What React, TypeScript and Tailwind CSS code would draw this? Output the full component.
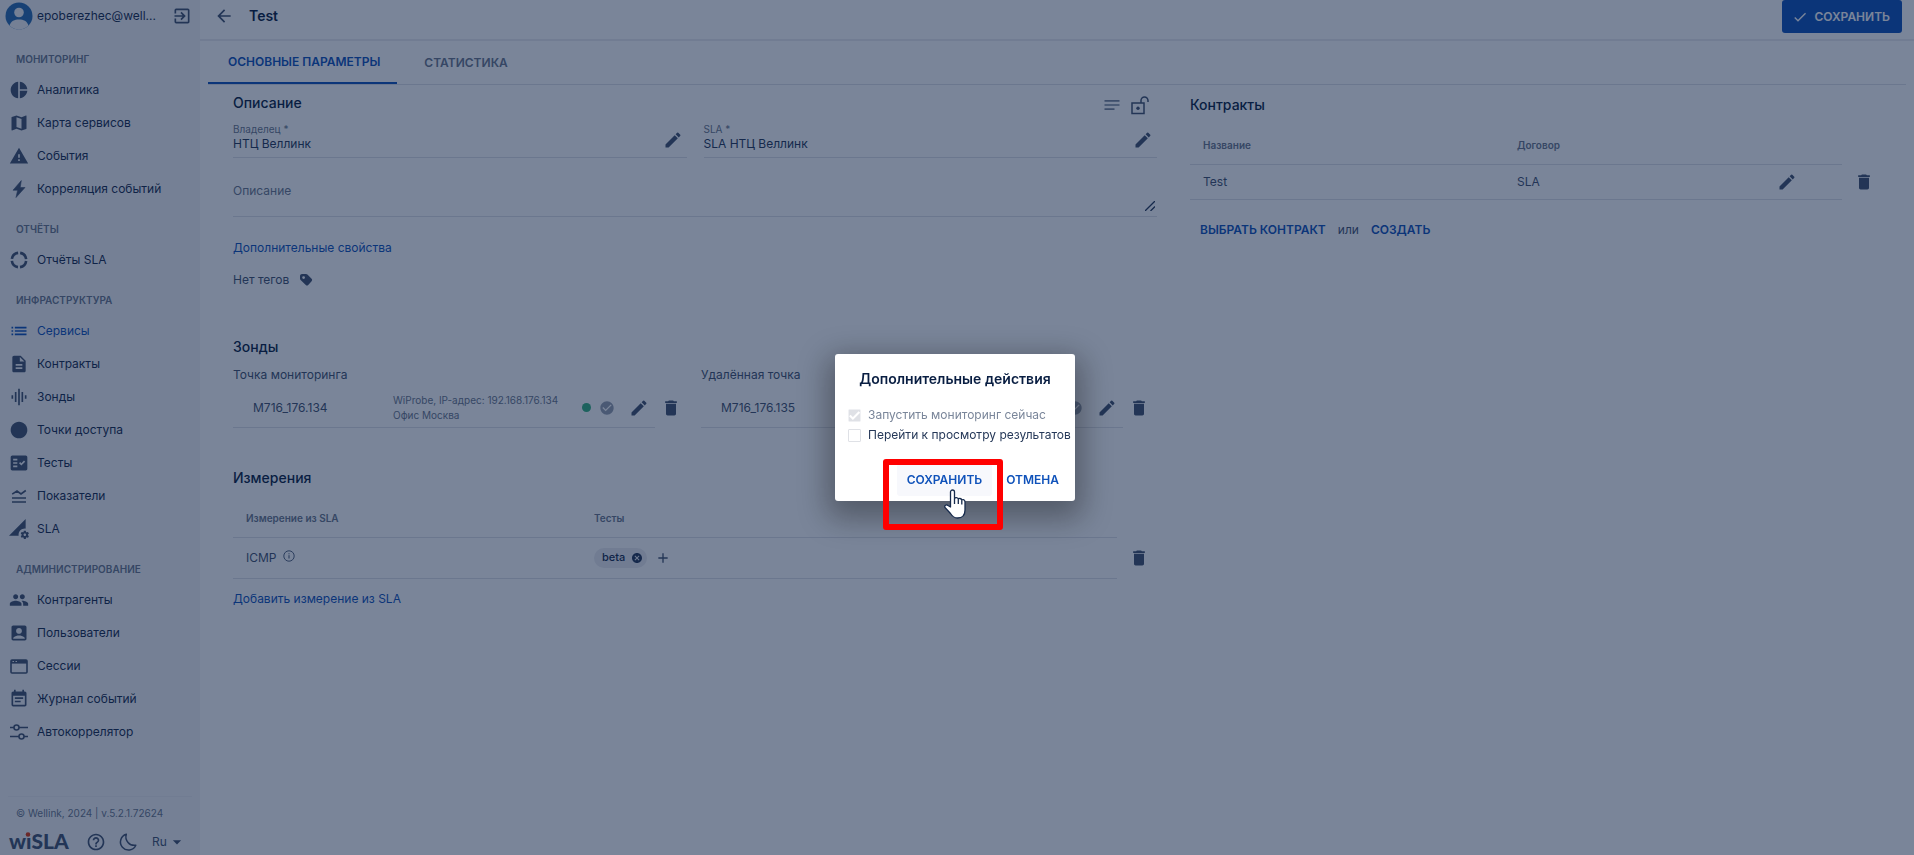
import { type ReactNode } from "react";
import {
  MdAccountBox, MdAdd, MdArrowBack, MdArrowDropDown, MdCancel, MdCheck, MdCheckCircle, MdCircle, MdDelete,
  MdDescription, MdEdit, MdEventNote, MdExitToApp, MdFactCheck, MdGraphicEq, MdHelpOutline, MdList, MdMap, MdNotes,
  MdPeople, MdPermDataSetting, MdPieChart, MdWarning,
} from "react-icons/md";

function BoltIcon() {
  return (
    <svg viewBox="0 0 20 20" className="size-5" fill="currentColor">
      <path d="M12.300 1.600 4 11.200h4.600l-1.600 7.300L16 8.500h-4.800l1.100-6.900Z" stroke="currentColor" strokeWidth=".6" strokeLinejoin="round" />
    </svg>
  );
}

function DonutIcon() {
  return (
    <svg viewBox="0 0 20 20" className="size-5" fill="none" stroke="currentColor" strokeWidth="2.6">
      <circle cx="10" cy="10" r="7.2" strokeDasharray="9.2 2.1" strokeDashoffset="-1" />
    </svg>
  );
}

function ApproxIcon() {
  return (
    <svg viewBox="0 0 20 20" className="size-5" fill="none" stroke="currentColor" strokeWidth="1.6">
      <path d="M3.2 8.2 8 5l4 3 4.800-3.500" />
      <path d="M3 12h14M3 16h14" />
    </svg>
  );
}

function WindowIcon() {
  return (
    <svg viewBox="0 0 20 20" className="size-5" fill="none" stroke="currentColor" strokeWidth="1.6">
      <rect x="2" y="4" width="16" height="13" rx="1" />
      <path d="M2 5.800h16" strokeWidth="3.600" />
      <path d="M3.500 5.500H5M6.500 5.500H8" stroke="#f4f5f7" strokeWidth="1.200" />
    </svg>
  );
}

function SlidersIcon() {
  return (
    <svg viewBox="0 0 20 20" className="size-5" fill="none" stroke="currentColor" strokeWidth="1.6">
      <circle cx="7.500" cy="5.500" r="2.500" />
      <circle cx="12.500" cy="14.500" r="2.500" />
      <path d="M1 5.500h4M10 5.500h9M1 14.500h9M15 14.500h4" />
    </svg>
  );
}

function UnlockIcon() {
  return (
    <svg viewBox="0 0 20 20" className="size-5" fill="none" stroke="currentColor" strokeWidth="1.500">
      <rect x="2" y="8" width="12" height="10.500" />
      <path d="M11 8V5.500a3.500 3.500 0 0 1 7 0V7" />
      <circle cx="8" cy="13.200" r="1.700" fill="currentColor" stroke="none" />
    </svg>
  );
}

function TagIcon() {
  return (
    <svg viewBox="0 0 14 14" className="size-3.5" fill="currentColor" fillRule="evenodd">
      <path d="M3 1h4c.600 0 1 .200 1.400.600l4.200 4.200c.700.700.700 1.700 0 2.400L9.200 11.900c-.700.700-1.700.700-2.400 0L1.600 7C1.200 6.600 1 6.200 1 5.600V3c0-1.100.900-2 2-2Zm1.600 2.200a1.400 1.400 0 1 0 0 2.800 1.400 1.400 0 0 0 0-2.800Z" />
    </svg>
  );
}

function InfoIcon() {
  return (
    <svg viewBox="0 0 12 12" className="mb-1 size-3" fill="none" stroke="currentColor">
      <circle cx="6" cy="6" r="5.200" strokeWidth=".9" />
      <path d="M6 5.200v3.300M6 3.300v1" />
    </svg>
  );
}

function MoonIcon() {
  return (
    <svg viewBox="0 0 20 20" className="size-5" fill="none" stroke="currentColor" strokeWidth="1.500" strokeLinejoin="round">
      <path d="M8.300 2.300A8 8 0 1 0 17.800 13.200 8.500 8.500 0 0 1 8.300 2.300Z" />
    </svg>
  );
}

function Avatar() {
  return (
    <svg viewBox="0 0 28 28" className="size-7">
      <circle cx="14" cy="14" r="13.500" fill="#2b6cb0" />
      <circle cx="14" cy="10.500" r="4.800" fill="#f4f5f7" />
      <path d="M4.500 23.500C6 19 9.500 17.500 14 17.500s8 1.500 9.500 6A13 13 0 0 1 4.500 23.500Z" fill="#f4f5f7" />
    </svg>
  );
}

function Logo() {
  return (
    <svg viewBox="0 0 64 26" className="h-[26px] w-16" role="img" aria-label="wiSLA">
      <text x="1" y="20" fontFamily="Lato, sans-serif" fontWeight="900" fontSize="21" fill="currentColor">wıSLA</text>
      <circle cx="20" cy="5.500" r="2.300" fill="#de350b" />
    </svg>
  );
}

function HandCursor() {
  return (
    <svg viewBox="0 0 22 30" className="absolute top-[135px] left-[109px] h-[30px] w-[22px]" fill="#fff" stroke="#172b4d" strokeWidth="1.300" strokeLinejoin="round">
      <path d="M6.500 18V3a2 2 0 0 1 4 0v7c0-2 3.800-2 3.800.5 0-1.500 3.500-1.500 3.500 1 0-1.500 3.200-1.200 3.200 1.500v8c0 5-2.500 8-7.500 8-4 0-5.500-2-7-4.500L1 18.500c-1-2 1.500-3.500 3-2Z" />
      <path d="M10.500 10v5M14.300 11v4M17.800 12v3.500" />
    </svg>
  );
}

const menu: { title: string; items: { label: string; icon: ReactNode; active?: boolean }[] }[] = [
  {
    title: "МОНИТОРИНГ",
    items: [
      { label: "Аналитика", icon: <MdPieChart /> },
      { label: "Карта сервисов", icon: <MdMap /> },
      { label: "События", icon: <MdWarning /> },
      { label: "Корреляция событий", icon: <BoltIcon /> },
    ],
  },
  { title: "ОТЧЁТЫ", items: [{ label: "Отчёты SLA", icon: <DonutIcon /> }] },
  {
    title: "ИНФРАСТРУКТУРА",
    items: [
      { label: "Сервисы", icon: <MdList />, active: true },
      { label: "Контракты", icon: <MdDescription /> },
      { label: "Зонды", icon: <MdGraphicEq /> },
      { label: "Точки доступа", icon: <MdCircle /> },
      { label: "Тесты", icon: <MdFactCheck /> },
      { label: "Показатели", icon: <ApproxIcon /> },
      { label: "SLA", icon: <MdPermDataSetting /> },
    ],
  },
  {
    title: "АДМИНИСТРИРОВАНИЕ",
    items: [
      { label: "Контрагенты", icon: <MdPeople /> },
      { label: "Пользователи", icon: <MdAccountBox /> },
      { label: "Сессии", icon: <WindowIcon /> },
      { label: "Журнал событий", icon: <MdEventNote /> },
      { label: "Автокоррелятор", icon: <SlidersIcon /> },
    ],
  },
];

function Sidebar() {
  return (
    <aside className="flex w-[200px] shrink-0 flex-col bg-[#f4f5f7] text-[#172b4d]">
      <div className="flex h-8 items-center gap-1 pr-2 pl-[5px]">
        <Avatar />
        <span className="flex-1 truncate">epoberezhec@well...</span>
        <button aria-label="Выйти" className="text-xl text-[#42526e]"><MdExitToApp /></button>
      </div>
      <nav className="pt-[3px]">
        {menu.map((group) => (
          <section key={group.title} className="pt-3.5">
            <h3 className="h-6 pl-4 text-[10px] leading-5 font-semibold text-[#6b778c]">{group.title}</h3>
            <ul>
              {group.items.map((item) => (
                <li key={item.label}>
                  <a
                    href="#"
                    className={
                      item.active
                        ? "flex h-[33px] items-center gap-2 pl-[9px] text-[#0f52ba]"
                        : "flex h-[33px] items-center gap-2 pl-[9px]"
                    }
                  >
                    <span className={item.active ? "text-xl" : "text-xl text-[#42526e]"}>{item.icon}</span>
                    {item.label}
                  </a>
                </li>
              ))}
            </ul>
          </section>
        ))}
      </nav>
      <footer className="mt-auto px-2">
        <p className="border-t border-[#ebecf0] py-2 pl-2 text-[10px] leading-4 text-[#6b778c]">© Wellink, 2024 | v.5.2.1.72624</p>
        <div className="flex h-[26px] items-center text-[#42526e]">
          <Logo />
          <button aria-label="Справка" className="ml-3.5 text-xl"><MdHelpOutline /></button>
          <button aria-label="Тема" className="ml-3"><MoonIcon /></button>
          <button className="ml-3.5 flex items-center">Ru<MdArrowDropDown className="text-xl" /></button>
        </div>
      </footer>
    </aside>
  );
}

function Field({ label, value, id }: { label: string; value: string; id: string }) {
  return (
    <div className="flex flex-1 items-center border-b border-[#dfe1e6] pr-1">
      <div className="flex h-[34px] flex-1 flex-col">
        <label htmlFor={id} className="text-[10px] leading-[13px] text-[#6b778c]">{label}</label>
        <input id={id} readOnly defaultValue={value} className="h-4 w-full bg-transparent text-[#253858] outline-none" />
      </div>
      <button aria-label="Изменить" className="text-xl"><MdEdit /></button>
    </div>
  );
}

function Probe({ title, name, children }: { title: string; name: string; children?: ReactNode }) {
  return (
    <div className="flex-1">
      <h3 className="h-[23px] leading-5">{title}</h3>
      <div className="flex items-center">
        <div className="flex h-10 flex-1 items-center border-b border-[#dfe1e6] pr-1.5 pl-5">
          <span className="w-[140px]">{name}</span>
          <p className="flex-1 text-[10px] leading-[15px] whitespace-nowrap text-[#6b778c]">{children}</p>
          <span className="size-[9px] rounded-full bg-[#36b37e]" />
          <MdCheckCircle className="ml-2 text-base text-[#97a0af]" />
          <button aria-label="Изменить" className="ml-3.5 text-xl"><MdEdit /></button>
        </div>
        <button aria-label="Удалить" className="w-8 pl-1.5 text-xl"><MdDelete /></button>
      </div>
    </div>
  );
}

function SaveDialog() {
  return (
    <div className="fixed inset-0 z-10 flex items-center justify-center bg-[#091e42]/54 pr-1">
      <div role="dialog" aria-labelledby="dialog-title" className="relative h-[147px] w-60 rounded-[3px] bg-white shadow-[0_10px_30px_8px_rgba(0,0,0,0.32)]">
        <h2 id="dialog-title" className="pt-3.5 text-center text-sm leading-[22px] font-semibold text-[#091e42]">Дополнительные действия</h2>
        <div className="flex flex-col pt-[15px] pl-[13px] leading-5">
          <label className="flex items-center gap-[7px] whitespace-nowrap text-[#7a869a]">
            <span className="relative flex size-[13px]">
              <input type="checkbox" defaultChecked disabled className="size-[13px] appearance-none rounded-[1px] bg-[#dfe1e6]" />
              <MdCheck className="absolute inset-0 size-[13px] stroke-2 text-white" />
            </span>
            Запустить мониторинг сейчас
          </label>
          <label className="flex items-center gap-[7px] whitespace-nowrap text-[#253858]">
            <input type="checkbox" className="size-[13px] appearance-none rounded-[1px] border border-[#dfe1e6]" />
            Перейти к просмотру результатов
          </label>
        </div>
        <div className="flex justify-end gap-1 pt-[19px] pr-1.5 font-semibold text-[#0f52ba]">
          <button className="h-8 rounded-[3px] bg-[#f7f8fc] px-2.5">СОХРАНИТЬ</button>
          <button className="h-8 px-2.5">ОТМЕНА</button>
        </div>
        <div className="absolute top-[105px] left-12 h-[71px] w-[120px] rounded-[3px] border-6 border-[#ff0000]" />
        <HandCursor />
      </div>
    </div>
  );
}

export default function App() {
  return (
    <div className="flex min-h-screen bg-white font-['Inter',sans-serif] text-xs text-[#42526e]">
      <Sidebar />
      <main className="min-w-0 flex-1">
        <header className="flex h-[41px] items-start border-b-2 border-[#ebecf0] pr-3 pl-3.5">
          <button aria-label="Назад" className="mt-1.5 text-xl"><MdArrowBack /></button>
          <h1 className="ml-[15px] flex-1 text-sm leading-8 font-semibold text-[#091e42]">Test</h1>
          <button className="flex h-[33px] items-center gap-1.5 rounded-[3px] bg-[#0f52ba] pr-3 pl-2.5 font-semibold text-white">
            <MdCheck className="text-base" />
            СОХРАНИТЬ
          </button>
        </header>

        <div className="mx-2 flex h-11 border-b border-[#dfe1e6] font-semibold">
          <button className="h-[43px] border-b-2 border-[#0f52ba] pr-[17px] pl-5 text-[#0f52ba]">ОСНОВНЫЕ ПАРАМЕТРЫ</button>
          <button className="h-[43px] px-[27px] text-[#6b778c]">СТАТИСТИКА</button>
        </div>

        <div className="flex gap-[33px] pr-10 pl-[33px]">
          <div className="w-[924px]">
            <section className="pt-1.5">
              <div className="flex h-7 justify-between pr-[7px]">
                <h2 className="text-sm leading-6 font-medium text-[#091e42]">Описание</h2>
                <div className="flex items-center gap-2">
                  <MdNotes className="text-xl text-[#7a869a]" />
                  <button aria-label="Разблокировать"><UnlockIcon /></button>
                </div>
              </div>
              <div className="flex gap-[17px] pt-1">
                <Field id="owner" label="Владелец *" value="НТЦ Веллинк" />
                <Field id="sla" label="SLA *" value="SLA НТЦ Веллинк" />
              </div>
              <div className="relative mt-[25px]">
                <textarea aria-label="Описание" placeholder="Описание" className="block h-[34px] w-full resize-none border-b border-[#dfe1e6] outline-none placeholder:text-[#6b778c]" />
                <svg viewBox="0 0 10 10" className="absolute right-0.5 bottom-1.5 size-2.5" stroke="#253858" strokeWidth="1.300">
                  <path d="M0 10 10 0M5.500 10 10 5.500" />
                </svg>
              </div>
              <a href="#" className="mt-[21px] block leading-5 text-[#0f52ba]">Дополнительные свойства</a>
              <div className="mt-3 flex items-center gap-2.5 leading-5">
                Нет тегов
                <TagIcon />
              </div>
            </section>

            <section className="pt-[47px]">
              <h2 className="mb-2 text-sm leading-5 font-medium text-[#091e42]">Зонды</h2>
              <div className="flex gap-3.5 pr-0.5">
                <Probe title="Точка мониторинга" name="M716_176.134">
                  WiProbe, IP-адрес: 192.168.176.134
                  <br />
                  Офис Москва
                </Probe>
                <Probe title="Удалённая точка" name="M716_176.135" />
              </div>
            </section>

            <section className="pt-10">
              <h2 className="text-sm leading-5 font-medium text-[#091e42]">Измерения</h2>
              <table className="mt-[13px] w-full">
                <thead>
                  <tr className="h-9 text-left text-[10px] text-[#6b778c]">
                    <th className="w-[348px] border-b border-[#dfe1e6] pl-[13px] font-semibold">Измерение из SLA</th>
                    <th className="border-b border-[#dfe1e6] pl-[13px] font-semibold">Тесты</th>
                    <td className="w-10" />
                  </tr>
                </thead>
                <tbody>
                  <tr className="h-[41px]">
                    <td className="border-b border-[#dfe1e6] pl-[13px]">
                      <span className="flex items-center gap-1.5">ICMP <InfoIcon /></span>
                    </td>
                    <td className="border-b border-[#dfe1e6] pl-[13px]">
                      <div className="flex items-center gap-2">
                        <span className="flex h-5 items-center gap-1.5 rounded-full bg-[#ebecf0] pr-1 pl-2 text-[11px] font-medium text-[#172b4d]">
                          beta <MdCancel className="text-xs text-[#253858]" />
                        </span>
                        <button aria-label="Добавить тест" className="text-base"><MdAdd /></button>
                      </div>
                    </td>
                    <td><button aria-label="Удалить" className="block pl-3 text-xl"><MdDelete /></button></td>
                  </tr>
                </tbody>
              </table>
              <a href="#" className="mt-2.5 inline-block leading-5 text-[#0f52ba]">Добавить измерение из SLA</a>
            </section>
          </div>

          <section className="flex-1 pt-2.5">
            <h2 className="text-sm leading-5 font-medium text-[#091e42]">Контракты</h2>
            <table className="mt-[9px] w-full">
              <thead>
                <tr className="h-10 text-left text-[10px] text-[#6b778c]">
                  <th className="border-b border-[#dfe1e6] pt-1 pl-[13px] font-semibold">Название</th>
                  <th className="w-[250px] border-b border-[#dfe1e6] pt-1 font-semibold">Договор</th>
                  <td className="w-[75px] border-b border-[#dfe1e6]" />
                  <td className="w-8" />
                </tr>
              </thead>
              <tbody>
                <tr className="h-[35px]">
                  <td className="border-b border-[#dfe1e6] pl-[13px]">Test</td>
                  <td className="border-b border-[#dfe1e6]">SLA</td>
                  <td className="border-b border-[#dfe1e6]"><button aria-label="Изменить" className="block pl-2.5 text-xl"><MdEdit /></button></td>
                  <td><button aria-label="Удалить" className="block pl-3 text-xl"><MdDelete /></button></td>
                </tr>
              </tbody>
            </table>
            <div className="mt-4 flex items-center pl-2.5 leading-7">
              <button className="font-semibold text-[#0f52ba]">ВЫБРАТЬ КОНТРАКТ</button>
              <span className="mx-3">или</span>
              <button className="font-semibold text-[#0f52ba]">СОЗДАТЬ</button>
            </div>
          </section>
        </div>
      </main>
      <SaveDialog />
    </div>
  );
}
